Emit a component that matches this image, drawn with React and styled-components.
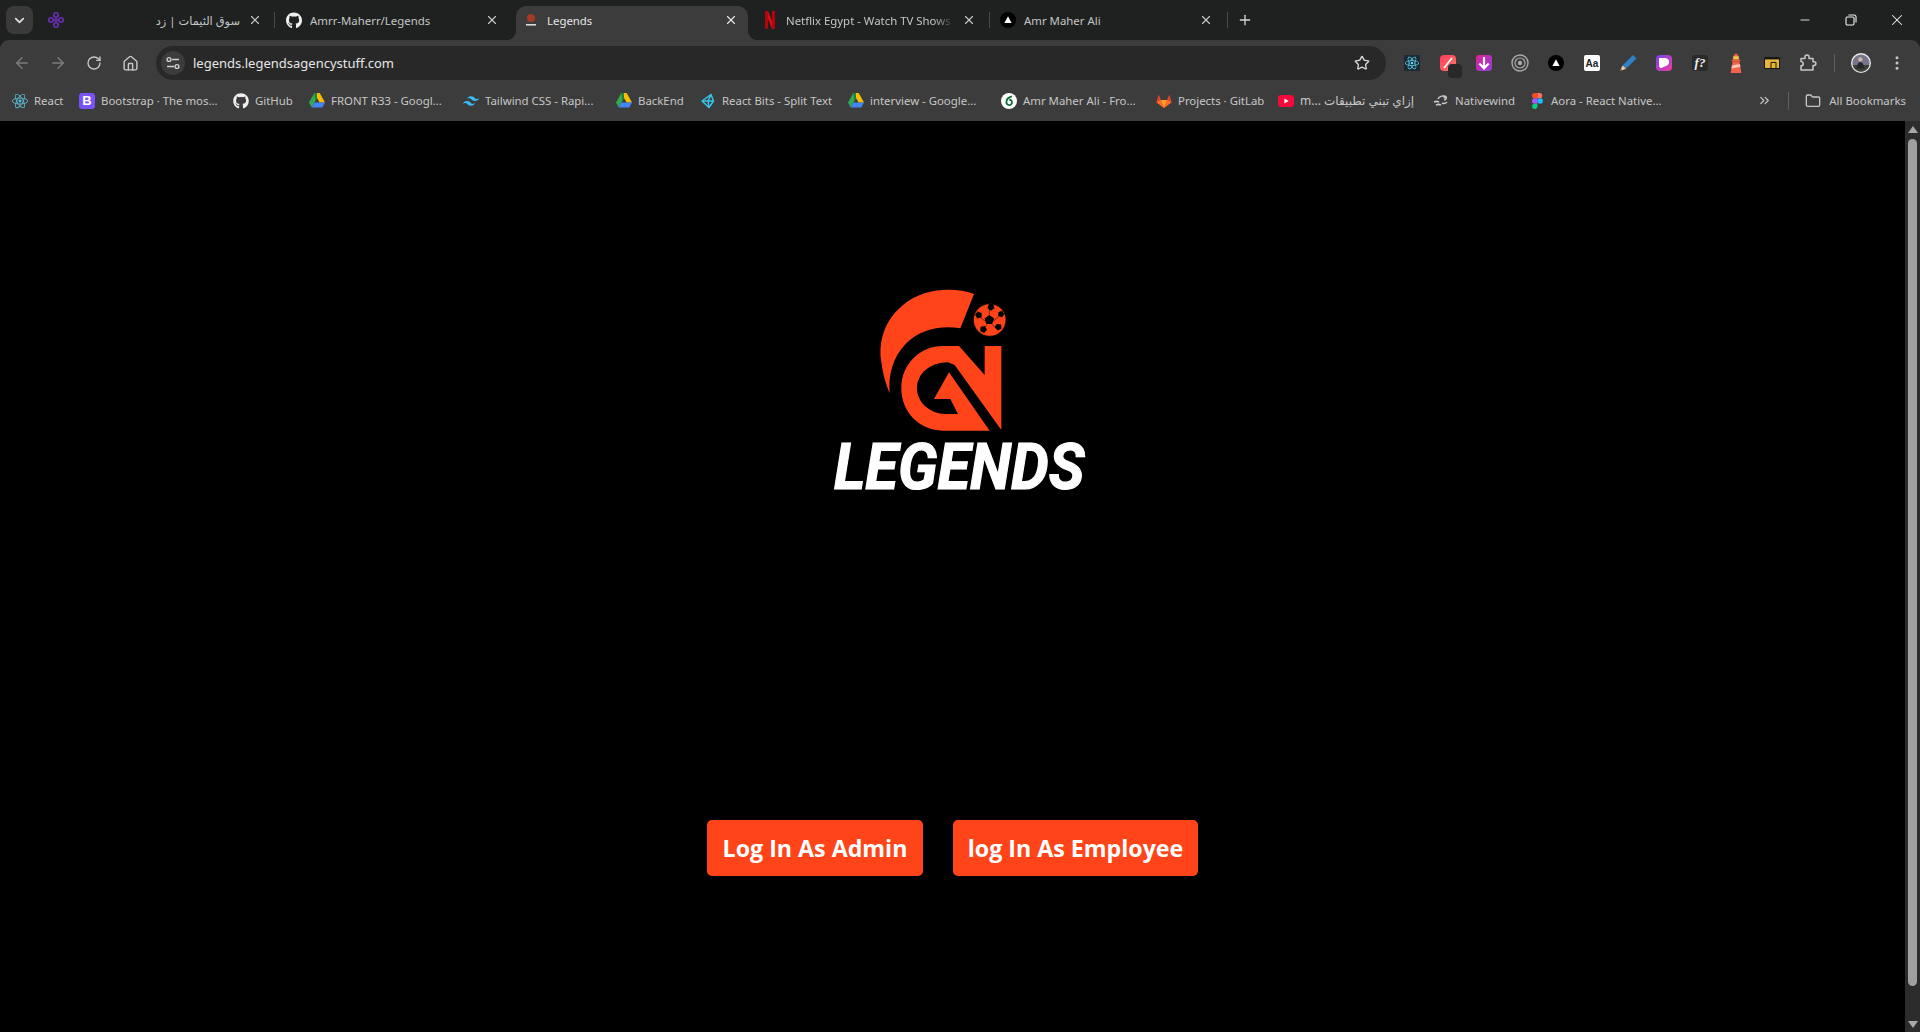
import React from 'react'
import styled, { createGlobalStyle } from 'styled-components'
import {
  ArrowLeft, ArrowRight, ChevronDown, ChevronsRight, EllipsisVertical, Folder, House,
  Minus, Plus, RotateCw, Star, X,
} from 'lucide-react'
import { FaGithub } from 'react-icons/fa'
import { SiReact, SiTailwindcss } from 'react-icons/si'

const Global = createGlobalStyle`
  html, body { margin: 0; padding: 0; height: 100%; overflow: hidden; background: #000; }
  * { box-sizing: border-box; }
  body { font-family: "Noto Sans", "DejaVu Sans", sans-serif; }
`

const Browser = styled.div`
  display: flex;
  flex-direction: column;
  height: 100vh;
  background: #1f2020;
`

const TabStrip = styled.div`
  display: flex;
  align-items: flex-end;
  height: 40px;
  background: #1f2020;
  padding-left: 6px;
`

const TabListButton = styled.div`
  display: flex;
  align-items: center;
  justify-content: center;
  width: 27px;
  height: 28px;
  margin-bottom: 6px;
  border-radius: 8px;
  background: #3a3a3a;
  color: #e3e3e3;
`

const PinnedTab = styled.div`
  display: flex;
  align-items: center;
  justify-content: center;
  width: 41px;
  height: 34px;
  padding: 0 0 6px 5px;
`

const Tab = styled.div`
  position: relative;
  display: flex;
  align-items: center;
  flex: none;
  width: ${(p) => p.$w}px;
  height: 34px;
  padding: 0 ${(p) => p.$pr}px 6px ${(p) => p.$pl}px;
  font-size: 11.4px;
  color: ${(p) => (p.$active ? '#e6e6e6' : '#c4c7c5')};
  background: ${(p) => (p.$active ? '#3c3c3c' : 'transparent')};
  border-radius: 10px 10px 0 0;

  ${(p) => p.$active && `
    &:before, &:after {
      content: '';
      position: absolute;
      bottom: 0;
      width: 10px;
      height: 10px;
    }
    &:before { left: -10px; background: radial-gradient(circle at 0 0, #1f2020 10px, #3c3c3c 10.5px); }
    &:after { right: -10px; background: radial-gradient(circle at 100% 0, #1f2020 10px, #3c3c3c 10.5px); }
  `}
`

const TabIcon = styled.span`
  display: flex;
  flex: none;
  align-items: center;
  justify-content: center;
  width: 16px;
  height: 16px;
  margin-right: 8px;
`

const TabTitle = styled.span`
  flex: 1;
  min-width: 0;
  white-space: nowrap;
  overflow: hidden;
  ${(p) => p.$rtl && 'direction: rtl;'}
  ${(p) => p.$fade && 'mask-image: linear-gradient(90deg, #000 88%, transparent 100%);'}
`

const TabClose = styled(X)`
  flex: none;
  margin-left: 8px;
`

const TabDivider = styled.div`
  flex: none;
  width: 1px;
  height: 16px;
  margin-bottom: 12px;
  background: #4a4a4a;
  visibility: ${(p) => (p.$hidden ? 'hidden' : 'visible')};
`

const NewTab = styled.div`
  display: flex;
  align-items: center;
  justify-content: center;
  width: 34px;
  height: 34px;
  padding-bottom: 6px;
  color: #d5d5d5;
`

const WindowControls = styled.div`
  display: flex;
  margin-left: auto;
  height: 40px;
`

const WindowButton = styled.div`
  display: flex;
  align-items: center;
  justify-content: center;
  width: 46px;
  padding-bottom: 1px;
  color: #f0f0f0;
`

const Toolbar = styled.div`
  display: flex;
  align-items: flex-end;
  height: 40px;
  padding-left: 4px;
  background: #3c3c3c;
  border-radius: 9px 9px 0 0;
`

const NavButton = styled.div`
  display: flex;
  align-items: center;
  justify-content: center;
  flex: none;
  width: 36px;
  height: 34px;
  color: ${(p) => (p.$off ? '#7c7c7c' : '#c7c7c7')};
`

const Omnibox = styled.div`
  display: flex;
  align-items: center;
  width: 1230px;
  height: 34px;
  margin: 0 8px;
  padding: 0 16px 0 5px;
  border-radius: 17px;
  background: #282828;
  color: #e6e6e6;
  font-size: 13px;
`

const SiteInfo = styled.div`
  display: flex;
  align-items: center;
  justify-content: center;
  width: 24px;
  height: 24px;
  margin-right: 8px;
  border-radius: 50%;
  background: #3c3c3c;
`

const Url = styled.span`
  flex: 1;
`

const ExtSquare = styled.span`
  position: relative;
  display: flex;
  align-items: center;
  justify-content: center;
  width: 16px;
  height: 16px;
  border-radius: ${(p) => p.$r || 3}px;
  background: ${(p) => p.$bg};
  color: #fff;
`

const ExtBadge = styled.span`
  position: absolute;
  right: -6px;
  bottom: -7px;
  width: 14px;
  height: 14px;
  border-radius: 4px;
  background: #282828;
`

const AaText = styled.span`
  font-family: "Liberation Sans", sans-serif;
  font-size: 10px;
  font-weight: 700;
  color: #222;
`

const FqText = styled.span`
  font-family: "Liberation Serif", serif;
  font-size: 13px;
  font-style: italic;
  font-weight: 700;
  color: #eee;
`

const BootstrapLetter = styled.span`
  font-family: "Liberation Sans", sans-serif;
  font-size: 13px;
  font-weight: 700;
`

const ToolbarDivider = styled.div`
  flex: none;
  width: 1px;
  height: 18px;
  margin: 0 8px 8px 8px;
  background: #5f5f5f;
`

const BookmarksBar = styled.div`
  display: flex;
  align-items: center;
  height: 41px;
  padding-left: 12px;
  background: #3c3c3c;
  font-size: 11.4px;
  color: #c7c7c7;
`

const Bookmark = styled.div`
  display: flex;
  align-items: center;
  flex: none;
  width: ${(p) => p.$w}px;
  height: 28px;
`

const BookmarkIcon = styled.span`
  display: flex;
  align-items: center;
  justify-content: center;
  flex: none;
  width: 16px;
  height: 16px;
  margin-right: 6px;
`

const BookmarkLabel = styled.span`
  white-space: nowrap;
  ${(p) => p.$rtl && 'direction: rtl; font-size: 12px;'}
`

const BarRight = styled.div`
  display: flex;
  align-items: center;
  margin-left: auto;
  color: #c7c7c7;
`

const OverflowButton = styled.span`
  display: flex;
  width: 20px;
  justify-content: center;
`

const BarDivider = styled.div`
  width: 1px;
  height: 18px;
  margin: 0 16px 0 14px;
  background: #5f5f5f;
`

const AllBookmarks = styled.div`
  display: flex;
  align-items: center;
  gap: 8px;
  padding-right: 14px;
`

const Page = styled.div`
  display: flex;
  flex: 1;
  min-height: 0;
  background: #000;
`

const Content = styled.main`
  flex: 1;
  display: flex;
  flex-direction: column;
  align-items: center;
  padding-top: 164px;
`

const LogoBlock = styled.div`
  display: flex;
  flex-direction: column;
  align-items: center;
  margin-left: 14px;
`

const LogoMark = styled.svg`
  display: block;
  margin-right: 22px;
`

const LogoWord = styled.div`
  font-family: Roboto, "Liberation Sans", sans-serif;
  font-size: 65px;
  font-weight: 700;
  font-style: italic;
  line-height: 1;
  color: #fff;
  transform: scaleX(0.92);
  -webkit-text-stroke: 1.2px #fff;
`

const ButtonRow = styled.div`
  display: flex;
  gap: 30px;
  margin-top: 320px;
`

const LoginButton = styled.button`
  width: ${(p) => p.$w}px;
  height: 56px;
  padding: 0;
  border: 0;
  border-radius: 5px;
  background: #ff4419;
  color: #fff;
  font-family: "Open Sans", sans-serif;
  font-size: 23.2px;
  font-weight: 700;
`

const Scrollbar = styled.div`
  display: flex;
  flex-direction: column;
  align-items: center;
  width: 15px;
  padding-top: 5px;
  background: #2c2c2c;
`

const ScrollArrow = styled.div`
  flex: none;
  width: 0;
  height: 0;
  border-left: 5px solid transparent;
  border-right: 5px solid transparent;
  ${(p) => (p.$down ? 'border-top: 7px solid #a8a8a8;' : 'border-bottom: 7px solid #a8a8a8;')}
`

const ScrollThumb = styled.div`
  flex: none;
  width: 9px;
  height: 847px;
  margin: 6px 0 35px;
  border-radius: 5px;
  background: #9f9f9f;
`

const DriveIcon = () => (
  <svg width="16" height="15" viewBox="0 0 16 15">
    <path d="M5.3 0h5.4L16 9.5h-5.4z" fill="#fbbc04" />
    <path d="M5.3 0 0 9.5 2.7 14.5 8 5z" fill="#34a853" />
    <path d="M2.7 14.5h10.6L16 9.5H5.4z" fill="#4285f4" />
    <path d="M5.3 0h2.6L8 5 6.6 7.3z" fill="#188038" />
  </svg>
)

const GitlabIcon = () => (
  <svg width="16" height="16" viewBox="0 0 16 16">
    <path d="M8 15 .4 9.2 2.6 1.6 5 7h6l2.4-5.4 2.2 7.6z" fill="#e24329" />
    <path d="M8 15 5 7h6z" fill="#fca326" />
    <path d="M8 15 .4 9.2 5 7zM8 15l7.6-5.8L11 7z" fill="#fc6d26" />
  </svg>
)

const FigmaIcon = () => (
  <svg width="11" height="16" viewBox="0 0 11 16">
    <path d="M0 2.7A2.7 2.7 0 0 1 2.7 0h2.8v5.3H2.7A2.7 2.7 0 0 1 0 2.7z" fill="#f24e1e" />
    <path d="M5.5 0h2.7a2.7 2.7 0 0 1 0 5.3H5.5z" fill="#ff7262" />
    <path d="M0 8a2.7 2.7 0 0 1 2.7-2.7h2.8v5.4H2.7A2.7 2.7 0 0 1 0 8z" fill="#a259ff" />
    <circle cx="8.2" cy="8" r="2.7" fill="#1abcfe" />
    <path d="M0 13.3a2.7 2.7 0 0 1 2.7-2.6h2.8v2.6a2.7 2.7 0 0 1-5.5 0z" fill="#0acf83" />
  </svg>
)

const BlackTriangleIcon = () => (
  <svg width="16" height="16" viewBox="0 0 16 16">
    <circle cx="8" cy="8" r="8" fill="#000" />
    <path d="M8 4.2 11.6 11H4.4z" fill="#fff" />
  </svg>
)

const PurpleTabIcon = () => (
  <svg width="16" height="16" viewBox="0 0 16 16" fill="none" stroke="#6a2fb5" strokeWidth="1.6">
    <circle cx="8" cy="3" r="2.2" />
    <circle cx="8" cy="13" r="2.2" />
    <circle cx="3" cy="8" r="2.2" />
    <circle cx="13" cy="8" r="2.2" />
    <path d="M8 5v6M5 8h6" />
  </svg>
)

const LegendsFavicon = () => (
  <svg width="14" height="14" viewBox="0 0 14 14">
    <circle cx="7" cy="5" r="4" fill="#a33a22" />
    <path d="M2 11h10v1.6H2z" fill="#d8d8d8" />
  </svg>
)

const NetflixIcon = () => (
  <svg width="10" height="18" viewBox="0 0 10 18">
    <path d="M0 0h3l7 18H7z" fill="#e50914" />
    <path d="M0 0h3v17.4L0 18zM7 0h3v18l-3-.6z" fill="#b1060f" />
  </svg>
)

const SixIcon = () => (
  <svg width="16" height="16" viewBox="0 0 16 16">
    <circle cx="8" cy="8" r="8" fill="#fff" />
    <path d="M11 3.4C8 4 5.4 6 5.4 9.2a2.8 2.8 0 1 0 2.8-2.7" fill="none" stroke="#0f6b3c" strokeWidth="1.8" />
  </svg>
)

const YoutubeIcon = () => (
  <svg width="16" height="12" viewBox="0 0 16 12">
    <rect width="16" height="12" rx="3" fill="#f50a3c" />
    <path d="M6.4 3.4 10.6 6l-4.2 2.6z" fill="#fff" />
  </svg>
)

const WindIcon = () => (
  <svg width="16" height="14" viewBox="0 0 16 14" fill="none" stroke="#c7c7c7" strokeWidth="1.5">
    <path d="M1 8c2-1 3-1 5 0M3 11c2-1 3-1 5 0" />
    <path d="M5 5c1-3 6-4 8-2 1 1 0 3-2 3M9 9c2 1 4 0 5-1" />
    <circle cx="12" cy="3" r="1.6" fill="#c7c7c7" stroke="none" />
  </svg>
)

const ReactBitsIcon = () => (
  <svg width="16" height="16" viewBox="0 0 16 16" fill="none" stroke="#35c5f0" strokeWidth="1.5" strokeLinejoin="round">
    <path d="M11 1.5 2 8l7 6.5L13.5 8z" />
    <path d="M11 1.5 8 8l1 6.5M2 8h11.5" />
  </svg>
)

const LighthouseIcon = () => (
  <svg width="14" height="20" viewBox="0 0 14 20">
    <path d="M7 0 10 3.2H4z" fill="#f4593c" />
    <rect x="4.2" y="3.2" width="5.6" height="3.4" fill="#ffc24d" />
    <rect x="2.6" y="6.6" width="8.8" height="1.8" rx=".6" fill="#f4593c" />
    <path d="M3.6 8.4h6.8L12.4 20H1.6z" fill="#f0654a" />
    <path d="M3 12.6 10.9 11l.5 2.8-8.9 1.8z" fill="#ffc4b3" />
  </svg>
)

const PencilIcon = () => (
  <svg width="20" height="20" viewBox="0 0 20 20">
    <path d="M4.6 12.4 15 2l3.4 3.4L8 15.8z" fill="#2f80c9" />
    <path d="M4.6 12.4 8 15.8 2 18z" fill="#f3cda8" />
    <path d="M3 16 2 18l2-1z" fill="#333" />
  </svg>
)

const RingsIcon = () => (
  <svg width="18" height="18" viewBox="0 0 18 18" fill="none" stroke="#a9a9a9">
    <circle cx="9" cy="9" r="8" strokeWidth="1.4" />
    <circle cx="9" cy="9" r="5" strokeWidth="1.2" />
    <circle cx="9" cy="9" r="2.2" fill="#a9a9a9" stroke="none" />
  </svg>
)

const YellowBoxIcon = () => (
  <svg width="16" height="12" viewBox="0 0 16 12">
    <rect width="16" height="12" rx="1" fill="#161616" />
    <rect x="1" y="2.4" width="14" height="8.6" fill="#e7b53a" />
    <path d="M7 11V5.4h5V11" fill="none" stroke="#161616" strokeWidth="1" />
  </svg>
)

const Avatar = () => (
  <svg width="20" height="20" viewBox="0 0 20 20">
    <circle cx="10" cy="10" r="10" fill="#e8e8e8" />
    <circle cx="10" cy="10" r="8.6" fill="#77758c" />
    <path d="M1.6 12h16.8a8.6 8.6 0 0 1-16.8 0z" fill="#3c4136" />
    <circle cx="9.4" cy="6.4" r="2.2" fill="#cbb5a4" />
    <path d="M5.6 15.6c.3-3.4 1.6-6.6 3.8-6.6s3.6 3.2 3.8 6.6z" fill="#24262c" />
  </svg>
)

const PawIcon = () => (
  <svg width="12" height="12" viewBox="0 0 12 12">
    <path d="M1 1h5.4C10 1 11.6 3.4 11 6c-.6 2.4-3 3-4.4 3.4C5 10 4 11 3 11 1.6 11 1 9.6 1 8z" fill="#fff" />
  </svg>
)

const SlashIcon = () => (
  <svg width="16" height="16" viewBox="0 0 16 16">
    <path d="M12 3 4 13" stroke="#fff" strokeWidth="1.6" />
  </svg>
)

const ArrowDownWhite = () => (
  <svg width="12" height="13" viewBox="0 0 12 13" fill="none" stroke="#fff" strokeWidth="2.2">
    <path d="M6 0v11M1.4 6.6 6 11.4l4.6-4.8" />
  </svg>
)

const TuneIcon = () => (
  <svg width="16" height="16" viewBox="0 0 16 16" fill="none" stroke="#d0d0d0" strokeWidth="1.4">
    <circle cx="4" cy="4.5" r="1.9" />
    <path d="M7 4.5h7M2 11.5h7" />
    <circle cx="12" cy="11.5" r="1.9" />
  </svg>
)

const RestoreIcon = () => (
  <svg width="12" height="12" viewBox="0 0 12 12" fill="none" stroke="currentColor" strokeWidth="1.1">
    <rect x="1" y="3" width="8" height="8" rx="1.2" />
    <path d="M3.4 1h5.8A1.8 1.8 0 0 1 11 2.8v5.8" />
  </svg>
)

const ExtensionsIcon = () => (
  <svg width="18" height="18" viewBox="0 0 18 18" fill="none" stroke="#c7c7c7" strokeWidth="1.5" strokeLinejoin="round">
    <path d="M2 4.5h4V3a2 2 0 0 1 4 0v1.5h4v3.2h1a1.9 1.9 0 0 1 0 3.8h-1V16H2v-4.2c1.5 0 2.2-1 2.2-2.1S3.5 7.6 2 7.6z" />
  </svg>
)

const tabs = [
  { title: 'سوق الثيمات | زد', rtl: true, w: 200, pl: 8, pr: 12, sep: true },
  { title: 'Amrr-Maherr/Legends', icon: <FaGithub size={17} color="#f0f0f0" />, w: 240, pl: 11, pr: 16 },
  { title: 'Legends', icon: <LegendsFavicon />, w: 232, pl: 7, pr: 10, active: true },
  { title: 'Netflix Egypt - Watch TV Shows', icon: <NetflixIcon />, w: 240, pl: 13, pr: 13, fade: true, sep: true },
  { title: 'Amr Maher Ali', icon: <BlackTriangleIcon />, w: 237, pl: 10, pr: 14, sep: true },
]

const bookmarks = [
  { label: 'React', w: 67, icon: <SiReact size={16} color="#58c4dc" /> },
  { label: 'Bootstrap · The mos...', w: 154, icon: <ExtSquare $bg="#7952f5"><BootstrapLetter>B</BootstrapLetter></ExtSquare> },
  { label: 'GitHub', w: 76, icon: <FaGithub size={16} color="#f0f0f0" /> },
  { label: 'FRONT R33 - Googl...', w: 154, icon: <DriveIcon /> },
  { label: 'Tailwind CSS - Rapi...', w: 153, icon: <SiTailwindcss size={16} color="#38bdf8" /> },
  { label: 'BackEnd', w: 84, icon: <DriveIcon /> },
  { label: 'React Bits - Split Text', w: 148, icon: <ReactBitsIcon /> },
  { label: 'interview - Google...', w: 153, icon: <DriveIcon /> },
  { label: 'Amr Maher Ali - Fro...', w: 155, icon: <SixIcon /> },
  { label: 'Projects · GitLab', w: 122, icon: <GitlabIcon /> },
  { label: 'إزاي تبني تطبيقات ...m', w: 155, rtl: true, icon: <YoutubeIcon /> },
  { label: 'Nativewind', w: 96, icon: <WindIcon /> },
  { label: 'Aora - React Native...', w: 150, icon: <FigmaIcon /> },
]

const extensions = [
  <ExtSquare $bg="#1b2a33" $r={1}><SiReact size={14} color="#61dafb" /></ExtSquare>,
  <ExtSquare $bg="linear-gradient(135deg, #ff3b5c, #ff7a6a)" $r={4}><SlashIcon /><ExtBadge /></ExtSquare>,
  <ExtSquare $bg="linear-gradient(135deg, #e0209a, #8f3fd8)"><ArrowDownWhite /></ExtSquare>,
  <RingsIcon />,
  <BlackTriangleIcon />,
  <ExtSquare $bg="#fff" $r={2}><AaText>Aa</AaText></ExtSquare>,
  <PencilIcon />,
  <ExtSquare $bg="linear-gradient(135deg, #7b3ff2, #ee3fa0)" $r={4}><PawIcon /></ExtSquare>,
  <ExtSquare $bg="#2a2a2a"><FqText>f?</FqText></ExtSquare>,
  <LighthouseIcon />,
  <YellowBoxIcon />,
  <ExtensionsIcon />,
]

const BallPatch = styled.polygon`
  fill: #000;
`

const BallSeam = styled.path`
  fill: none;
  stroke: #1a0500;
  stroke-width: 1.6;
`

const pentagon = (cx, cy, r, rot = 0) =>
  [0, 1, 2, 3, 4].map((i) => {
    const a = ((rot + i * 72 - 90) * Math.PI) / 180
    return `${(cx + r * Math.cos(a)).toFixed(1)},${(cy + r * Math.sin(a)).toFixed(1)}`
  }).join(' ')

const Logo = () => (
  <LogoMark width="150" height="150" viewBox="0 0 450 450">
    <path d="M303 27C240 5 150 10 90 60 35 105 15 170 25 230c5 40 15 70 25 95-5-55 10-110 50-150 40-40 100-55 162-45z" fill="#ff4419" />
    <path d="M335 183h50v252L245 240l-20-8c-55 0-93 35-93 78s40 77 85 77h38l-23-45h-49l45-80 122 175H210c-70 0-125-55-125-127s55-127 125-127h48l77 87z" fill="#ff4419" />
    <circle cx="350" cy="105" r="50" fill="#2a0a02" />
    <circle cx="350" cy="105" r="47.5" fill="#ff4419" />
    <BallSeam d="M349 92V71M337 109 320 95M361 109 380 92M342 119 333 130M356 119 370 127" />
    <BallPatch points={pentagon(349, 105, 15)} />
    <BallPatch points={pentagon(354, 66, 11, 180)} />
    <BallPatch points={pentagon(317, 90, 11, 200)} />
    <BallPatch points={pentagon(384, 87, 10, 160)} />
    <BallPatch points={pentagon(331, 133, 11, 240)} />
    <BallPatch points={pentagon(376, 126, 11, 120)} />
  </LogoMark>
)

const App = () => (
  <Browser>
    <Global />
    <TabStrip>
      <TabListButton><ChevronDown size={15} strokeWidth={2.6} /></TabListButton>
      <PinnedTab><PurpleTabIcon /></PinnedTab>
      {tabs.map((t) => (
        <React.Fragment key={t.title}>
          <Tab $w={t.w} $pl={t.pl} $pr={t.pr} $active={t.active}>
            {t.icon && <TabIcon>{t.icon}</TabIcon>}
            <TabTitle $rtl={t.rtl} $fade={t.fade}>{t.title}</TabTitle>
            <TabClose size={14} strokeWidth={2} />
          </Tab>
          <TabDivider $hidden={!t.sep} />
        </React.Fragment>
      ))}
      <NewTab><Plus size={16} strokeWidth={2} /></NewTab>
      <WindowControls>
        <WindowButton><Minus size={14} strokeWidth={1.5} /></WindowButton>
        <WindowButton><RestoreIcon /></WindowButton>
        <WindowButton><X size={18} strokeWidth={1.4} /></WindowButton>
      </WindowControls>
    </TabStrip>
    <Toolbar>
      <NavButton $off><ArrowLeft size={18} /></NavButton>
      <NavButton $off><ArrowRight size={18} /></NavButton>
      <NavButton><RotateCw size={16} /></NavButton>
      <NavButton><House size={17} /></NavButton>
      <Omnibox>
        <SiteInfo><TuneIcon /></SiteInfo>
        <Url>legends.legendsagencystuff.com</Url>
        <Star size={16} color="#d8d8d8" />
      </Omnibox>
      {extensions.map((ext, i) => <NavButton key={i}>{ext}</NavButton>)}
      <ToolbarDivider />
      <NavButton><Avatar /></NavButton>
      <NavButton><EllipsisVertical size={18} /></NavButton>
    </Toolbar>
    <BookmarksBar>
      {bookmarks.map((b) => (
        <Bookmark key={b.label} $w={b.w}>
          <BookmarkIcon>{b.icon}</BookmarkIcon>
          <BookmarkLabel $rtl={b.rtl}>{b.label}</BookmarkLabel>
        </Bookmark>
      ))}
      <BarRight>
        <OverflowButton><ChevronsRight size={15} /></OverflowButton>
        <BarDivider />
        <AllBookmarks><Folder size={16} />All Bookmarks</AllBookmarks>
      </BarRight>
    </BookmarksBar>
    <Page>
      <Content>
        <LogoBlock>
          <Logo />
          <LogoWord>LEGENDS</LogoWord>
        </LogoBlock>
        <ButtonRow>
          <LoginButton $w={216}>Log In As Admin</LoginButton>
          <LoginButton $w={245}>log In As Employee</LoginButton>
        </ButtonRow>
      </Content>
      <Scrollbar>
        <ScrollArrow />
        <ScrollThumb />
        <ScrollArrow $down />
      </Scrollbar>
    </Page>
  </Browser>
)

export default App
